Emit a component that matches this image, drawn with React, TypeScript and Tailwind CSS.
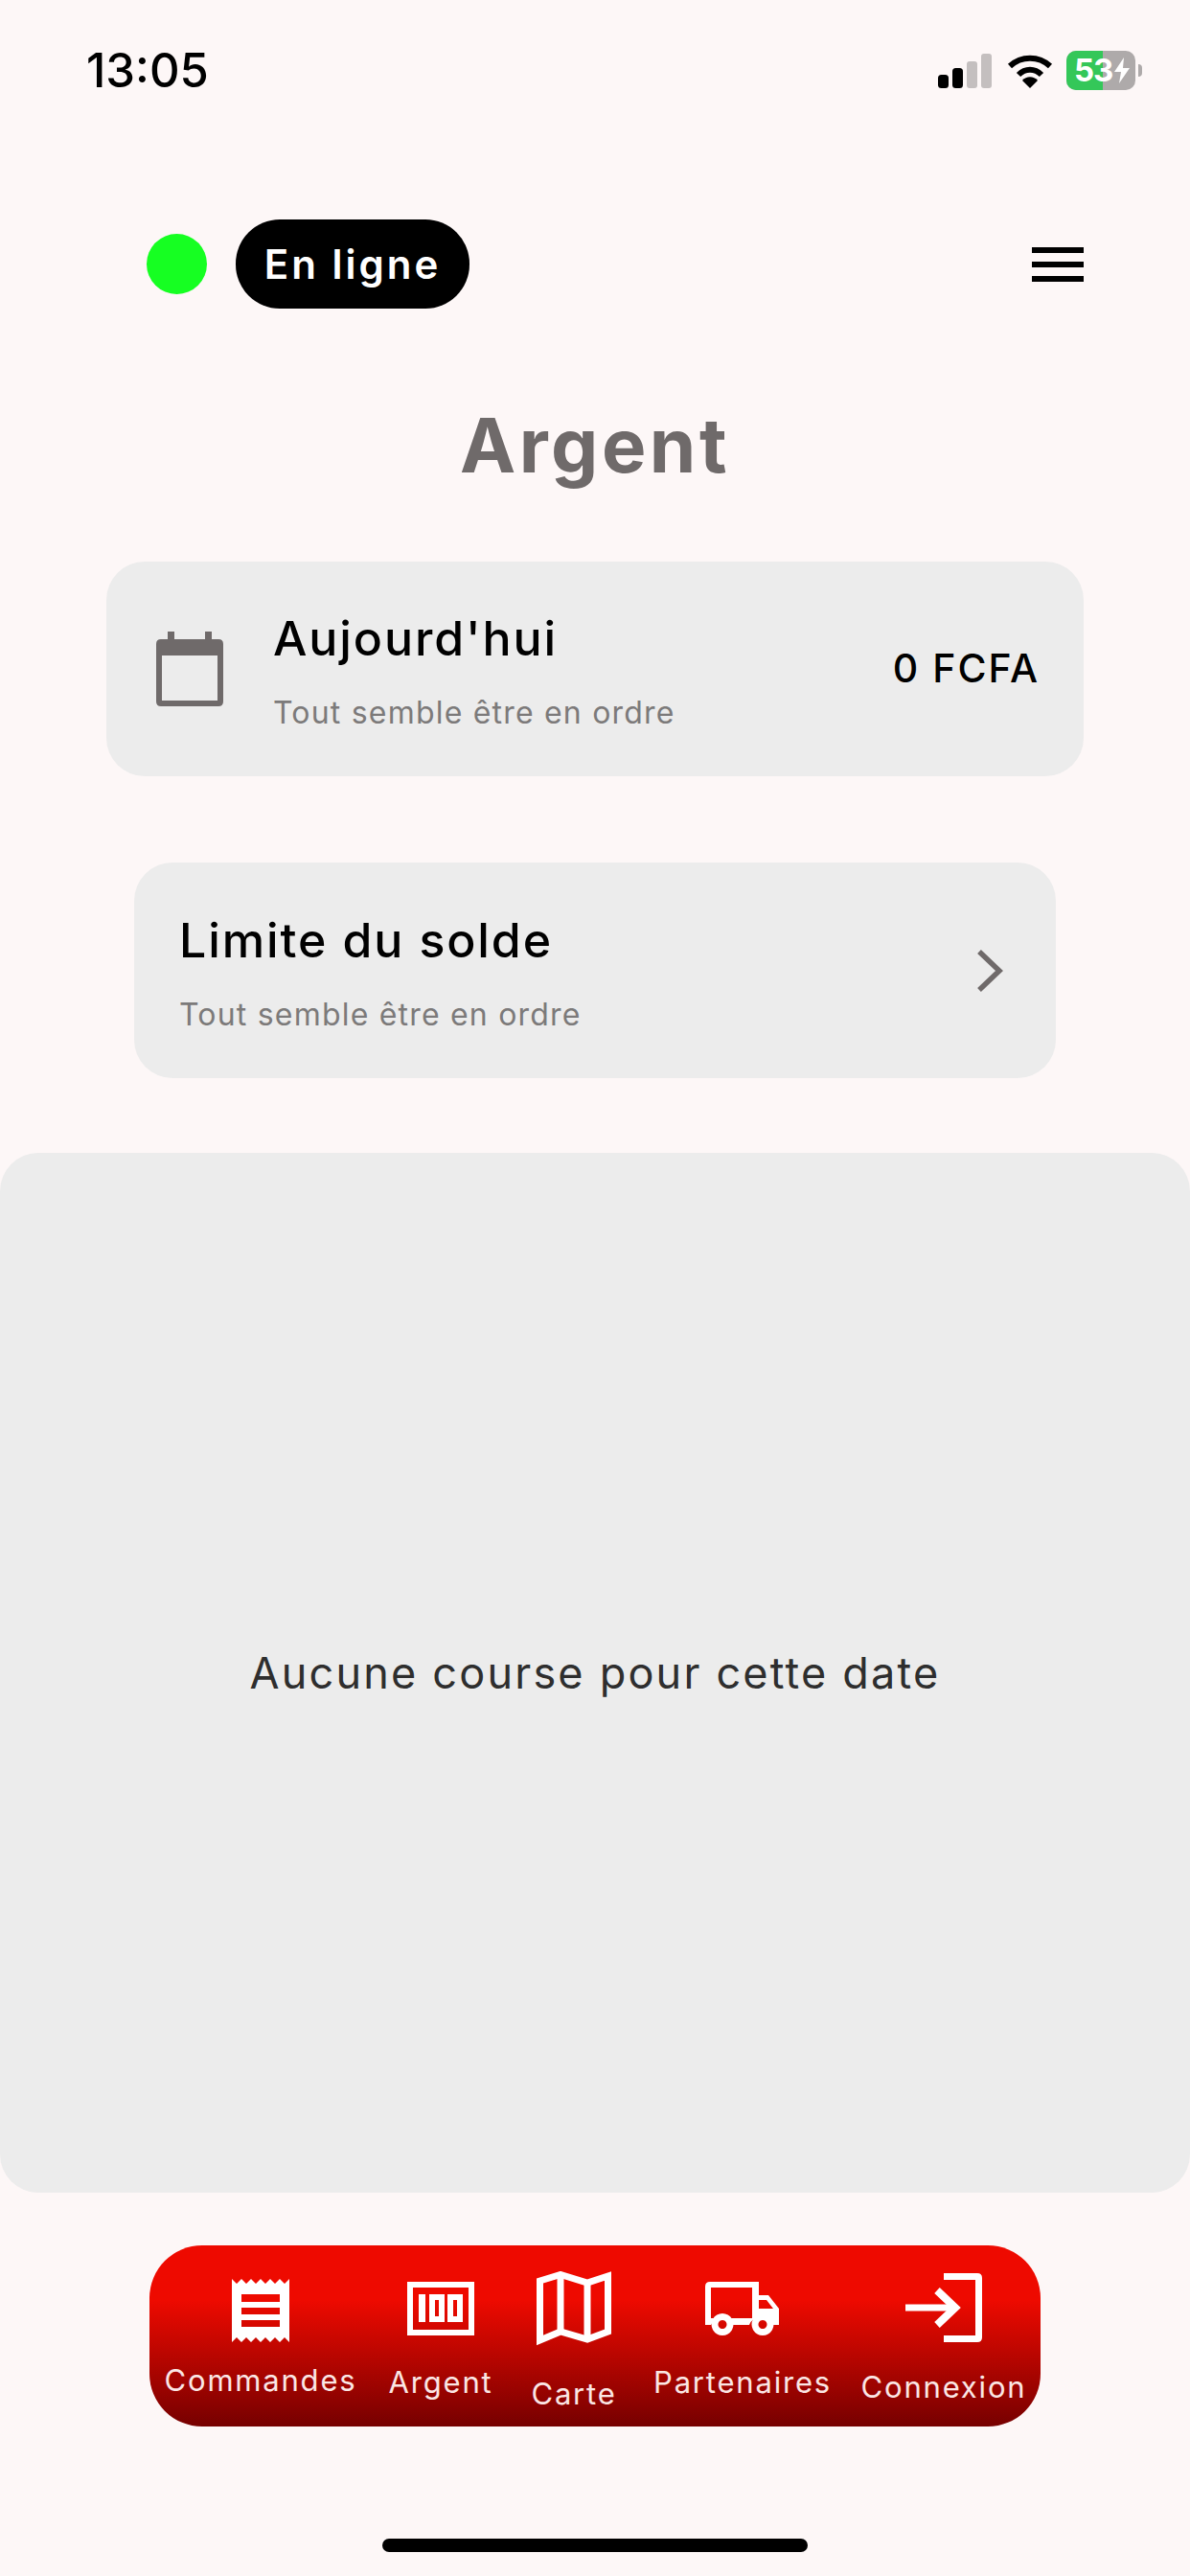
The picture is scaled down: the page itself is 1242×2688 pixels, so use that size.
function Signal() {
  return (
    <svg width="58" height="36" viewBox="0 0 58 36">
      <rect x="0" y="22" width="11" height="14" rx="3.5" fill="#000" />
      <rect x="15" y="15" width="11" height="21" rx="3.5" fill="#000" />
      <rect x="30" y="8" width="11" height="28" rx="3" fill="#c4bfbf" />
      <rect x="45" y="0" width="11" height="36" rx="3" fill="#c4bfbf" />
    </svg>
  );
}
function Wifi() {
  return (
    <svg width="48" height="36" viewBox="0 0 48 36" fill="none">
      <path d="M3 13 C15 2 33 2 45 13" stroke="#000" strokeWidth="6" />
      <path d="M12 22 C19 15 29 15 36 22" stroke="#000" strokeWidth="6" />
      <path d="M16 28 C20 23 28 23 32 28 L24 36 Z" fill="#000" />
    </svg>
  );
}
function Battery() {
  return (
    <div className="flex items-center gap-[3px]">
      <div className="relative w-[72px] h-[41px] rounded-[10px] overflow-hidden bg-[#aeaaaa]">
        <div className="h-full w-[38px] bg-[#34c759]" />
        <div className="absolute left-[8px] top-0 h-full flex items-center text-white font-bold text-[33px] leading-none tracking-[-1px]">53</div>
        <svg className="absolute left-[49px] top-[7px]" width="18" height="27" viewBox="0 0 18 27">
          <path d="M11 0 L1 15 H8 L6 27 L17 11 H10 Z" fill="#fff" />
        </svg>
      </div>
      <div className="w-[4px] h-[13px] rounded-r-full bg-[#aeaaaa]" />
    </div>
  );
}
function Calendar() {
  return (
    <svg width="70" height="78" viewBox="0 0 70 78">
      <path d="M12 0 H19 V8 H51 V0 H58 V8 H65 Q70 8 70 13 V73 Q70 78 65 78 H5 Q0 78 0 73 V13 Q0 8 5 8 H12 Z M6 25 V72 H64 V25 Z" fill="#6f6a6a" fillRule="evenodd" />
    </svg>
  );
}
function Receipt() {
  const top = "M0 0 L5 5 L10 0 L15 5 L20 0 L25 5 L30 0 L35 5 L40 0 L45 5 L50 0 L55 5 L60 0";
  return (
    <svg width="60" height="66" viewBox="0 0 60 66">
      <path
        d={`${top} V66 L55 61 L50 66 L45 61 L40 66 L35 61 L30 66 L25 61 L20 66 L15 61 L10 66 L5 61 L0 66 Z M10 16 V24 H50 V16 Z M10 30 V37 H50 V30 Z M10 43 V50 H50 V43 Z`}
        fill="#fff"
        fillRule="evenodd"
      />
    </svg>
  );
}
function Money() {
  return (
    <svg width="70" height="56" viewBox="0 0 70 56">
      <path d="M0 0 H70 V56 H0 Z M6 6 V50 H64 V6 Z" fill="#fff" fillRule="evenodd" />
      <rect x="12" y="13" width="7" height="29" fill="#fff" />
      <path d="M23 13 H39 V42 H23 Z M29 19 V36 H33 V19 Z" fill="#fff" fillRule="evenodd" />
      <path d="M42 13 H58 V42 H42 Z M48 19 V36 H52 V19 Z" fill="#fff" fillRule="evenodd" />
    </svg>
  );
}
function MapIcon() {
  return (
    <svg width="78" height="78" viewBox="0 0 78 78" fill="none" stroke="#fff" strokeWidth="7">
      <path d="M3.5 10 L25 3.5 L53 12 L74.5 5 V63 L53 71 L25 63 L3.5 72 Z" />
      <path d="M25 4 V63 M53 12 V71" />
    </svg>
  );
}
function Truck() {
  return (
    <svg width="78" height="56" viewBox="0 0 78 56">
      <path
        d="M5 0 H56 V14 H66 L77 28 V45 H70 A13 13 0 0 0 46 45 H29 A13 13 0 0 0 6 45 H0 V5 Q0 0 5 0 Z M6 6 V38 H49 V6 Z M56 19 V28 H71 L64 19 Z"
        fill="#fff"
        fillRule="evenodd"
      />
      <path d="M18 33 a11.5 11.5 0 1 0 0.01 0 Z M18 40 a4.5 4.5 0 1 1 -0.01 0 Z" fill="#fff" fillRule="evenodd" />
      <path d="M60 33 a11.5 11.5 0 1 0 0.01 0 Z M60 40 a4.5 4.5 0 1 1 -0.01 0 Z" fill="#fff" fillRule="evenodd" />
    </svg>
  );
}
function Login() {
  return (
    <svg width="80" height="72" viewBox="0 0 80 72" fill="none" stroke="#fff" strokeWidth="7">
      <path d="M40 3.5 H75 Q76.500 3.500 76.500 5 V67 Q76.500 68.500 75 68.500 H40" />
      <path d="M0 36 H50" />
      <path d="M33 18 L52 36 L33 54" strokeWidth="8" />
    </svg>
  );
}

export default function App() {
  return (
    <div
      className="w-[1242px] h-[2688px] bg-[#fdf7f7] flex flex-col overflow-hidden"
      style={{ fontFamily: "Inter, 'Liberation Sans', sans-serif" }}
    >
      <div className="h-[229px] shrink-0 flex items-start justify-between pl-[90px] pr-[50px] pt-[44px]">
        <div className="text-[49px] leading-[60px] font-medium text-black">13:05</div>
        <div className="flex items-center gap-[14px] pt-[9px]">
          <Signal />
          <Wifi />
          <Battery />
        </div>
      </div>

      <div className="flex items-center justify-between pl-[153px] pr-[111px] h-[93px] shrink-0">
        <div className="flex items-center gap-[30px]">
          <div className="w-[63px] h-[63px] shrink-0 rounded-full bg-[#16ff22]" />
          <div className="h-[93px] w-[244px] shrink-0 rounded-[46px] bg-black text-white flex items-center justify-center text-[42px] font-semibold tracking-[3px]">
            En ligne
          </div>
        </div>
        <div className="w-[54px] flex flex-col gap-[9px]">
          <div className="h-[6px] bg-black" />
          <div className="h-[6px] bg-black" />
          <div className="h-[6px] bg-black" />
        </div>
      </div>

      <div className="mt-[88px] text-center text-[78px] leading-[110px] font-bold text-[#6f6a6a] tracking-[3.5px]">Argent</div>

      <div className="mt-[66px] mx-[111px] h-[224px] shrink-0 rounded-[40px] bg-[#ececec] flex items-center pl-[52px] pr-[46px]">
        <Calendar />
        <div className="ml-[52px] flex-1 pt-[4px]">
          <div className="text-[50px] leading-[60px] font-medium text-black tracking-[1.9px]">Aujourd'hui</div>
          <div className="mt-[28px] text-[32px] leading-[40px] text-[#7c7a7a] tracking-[1.2px]">Tout semble être en ordre</div>
        </div>
        <div className="text-[41px] font-medium text-black tracking-[2px]">0 FCFA</div>
      </div>

      <div className="mt-[90px] mx-[140px] h-[225px] shrink-0 rounded-[40px] bg-[#ececec] flex items-center pl-[47px] pr-[55px]">
        <div className="flex-1 pt-[4px]">
          <div className="text-[50px] leading-[60px] font-medium text-black tracking-[1.9px]">Limite du solde</div>
          <div className="mt-[28px] text-[32px] leading-[40px] text-[#7c7a7a] tracking-[1.2px]">Tout semble être en ordre</div>
        </div>
        <svg width="28" height="46" viewBox="0 0 28 46" fill="none" stroke="#6f6a6a" strokeWidth="5.500">
          <path d="M3 3 L24 23 L3 43" />
        </svg>
      </div>

      <div className="mt-[78px] h-[1085px] shrink-0 rounded-[40px] bg-[#ececec] flex items-center justify-center text-[45px] tracking-[2.2px] text-[#2e2e2e]">
        Aucune course pour cette date
      </div>

      <div className="mt-[55px] mx-[156px] h-[189px] shrink-0 rounded-[55px] bg-[linear-gradient(180deg,#ee0a00_30%,#760000_100%)] flex items-start text-[31px] leading-[36px] tracking-[1.8px] text-[#fbe6e4]">
        <div className="w-[232px] pt-[35px] flex flex-col items-center">
          <Receipt />
          <div className="mt-[22px] whitespace-nowrap">Commandes</div>
        </div>
        <div className="w-[144px] pt-[38px] flex flex-col items-center">
          <Money />
          <div className="mt-[31px] whitespace-nowrap">Argent</div>
        </div>
        <div className="w-[134px] pt-[27px] flex flex-col items-center">
          <MapIcon />
          <div className="mt-[32px] whitespace-nowrap">Carte</div>
        </div>
        <div className="w-[218px] pt-[38px] flex flex-col items-center">
          <Truck />
          <div className="mt-[31px] whitespace-nowrap">Partenaires</div>
        </div>
        <div className="w-[202px] pt-[29px] flex flex-col items-center">
          <Login />
          <div className="mt-[29px] whitespace-nowrap">Connexion</div>
        </div>
      </div>

      <div className="mt-[117px] mx-auto w-[444px] h-[14px] shrink-0 rounded-full bg-black" />
    </div>
  );
}
